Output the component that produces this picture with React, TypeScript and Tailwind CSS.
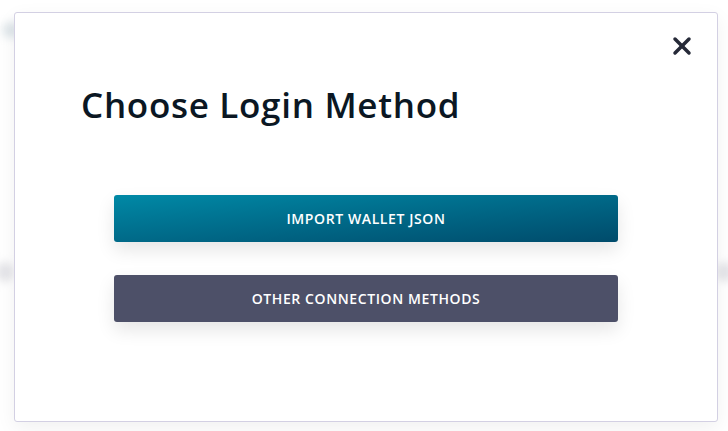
import { X } from "lucide-react";

const font = { fontFamily: '"Open Sans", "Noto Sans", sans-serif' };

export default function App() {
  return (
    <div className="relative w-[728px] h-[431px] overflow-hidden bg-white" style={font}>
      {/* blurred page content behind the modal */}
      <div className="absolute left-[2px] top-[22px] w-[20px] h-[16px] rounded-full bg-[#dfe6ea] blur-[4px]" />
      <div className="absolute left-[-4px] top-[262px] w-[18px] h-[20px] rounded-full bg-[#e4e4e8] blur-[4px]" />
      <div className="absolute left-[716px] top-[262px] w-[18px] h-[20px] rounded-full bg-[#e4e4e8] blur-[4px]" />

      <div className="relative ml-[14px] mt-[12px] w-[704px] h-[410px] flex flex-col rounded-[3px] border border-[#d3d0e3] bg-white shadow-[0_6px_20px_rgba(0,0,0,0.06)]">
        <div className="flex justify-end pt-[19px] pr-[21px]">
          <button className="text-[#262a38]">
            <X size={28} strokeWidth={3} />
          </button>
        </div>

        <h1 className="mt-[25px] pl-[66px] text-[35px] leading-[40px] font-semibold text-[#0b1723] tracking-[0.7px]">
          Choose Login Method
        </h1>

        <div className="mt-[70px] flex flex-col items-center gap-[33px]">
          <button className="w-[504px] h-[47px] rounded-[3px] bg-gradient-to-br from-[#0089a6] to-[#004b6b] text-white text-[14px] font-semibold tracking-[0.6px] shadow-[0_8px_18px_rgba(0,0,0,0.1)]">
            IMPORT WALLET JSON
          </button>
          <button className="w-[504px] h-[47px] rounded-[3px] bg-[#4d5068] text-white text-[14px] font-semibold tracking-[0.6px] shadow-[0_8px_18px_rgba(0,0,0,0.1)]">
            OTHER CONNECTION METHODS
          </button>
        </div>
      </div>
    </div>
  );
}
